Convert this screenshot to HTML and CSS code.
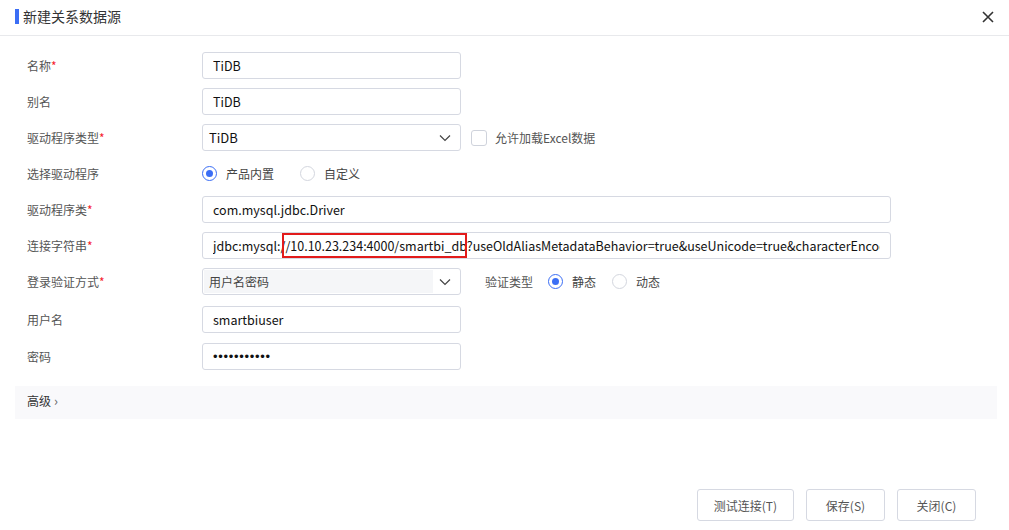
FILE: index.html
```html
<!DOCTYPE html>
<html lang="zh-CN">
  <head>
    <meta charset="UTF-8" />
    <meta name="viewport" content="width=device-width, initial-scale=1.0" />
    <title>新建关系数据源</title>
    <link rel="stylesheet" href="styles.css">
  </head>
  <body>
    <div class="dialog">
      <div class="header">
        <span class="title">新建关系数据源</span>
        <svg class="close" width="12" height="12" viewBox="0 0 12 12">
          <path d="M1 1L11 11M11 1L1 11" stroke="#333" stroke-width="1.6" fill="none"></path>
        </svg>
      </div>

      <div class="form">
        <div class="row">
          <label class="label">名称<i>*</i></label>
          <input class="input short" type="text" value="TiDB" />
        </div>
        <div class="row">
          <label class="label">别名</label>
          <input class="input short" type="text" value="TiDB" />
        </div>
        <div class="row">
          <label class="label">驱动程序类型<i>*</i></label>
          <div class="select short">
            <span class="select-text">TiDB</span>
            <svg class="chevron" width="12" height="8" viewBox="0 0 12 8"><path d="M1 1.5L6 6.5L11 1.5" stroke="#444" stroke-width="1.2" fill="none"></path></svg>
          </div>
          <span class="checkbox"></span>
          <span class="extra">允许加载Excel数据</span>
        </div>
        <div class="row">
          <label class="label">选择驱动程序</label>
          <span class="radio checked"></span>
          <span class="radio-text">产品内置</span>
          <span class="radio"></span>
          <span class="radio-text">自定义</span>
        </div>
        <div class="row">
          <label class="label">驱动程序类<i>*</i></label>
          <input class="input long" type="text" value="com.mysql.jdbc.Driver" />
        </div>
        <div class="row">
          <label class="label">连接字符串<i>*</i></label>
          <div class="field-wrap">
            <input class="input long" type="text" value="jdbc:mysql://10.10.23.234:4000/smartbi_db?useOldAliasMetadataBehavior=true&amp;useUnicode=true&amp;characterEncoding=UTF-8" />
            <span class="mark"></span>
          </div>
        </div>
        <div class="row row-login">
          <label class="label">登录验证方式<i>*</i></label>
          <div class="select short">
            <span class="select-text grey">用户名密码</span>
            <svg class="chevron" width="12" height="8" viewBox="0 0 12 8"><path d="M1 1.5L6 6.5L11 1.5" stroke="#444" stroke-width="1.2" fill="none"></path></svg>
          </div>
          <span class="extra-label">验证类型</span>
          <span class="radio checked"></span>
          <span class="radio-text tight">静态</span>
          <span class="radio"></span>
          <span class="radio-text tight">动态</span>
        </div>
        <div class="row row-user">
          <label class="label">用户名</label>
          <input class="input short" type="text" value="smartbiuser" />
        </div>
        <div class="row">
          <label class="label">密码</label>
          <input class="input short" type="password" value="smartbiuser" />
        </div>
      </div>

      <div class="advanced">高级 <span class="arrow">›</span></div>

      <div class="footer">
        <button class="btn wide">测试连接(T)</button>
        <button class="btn">保存(S)</button>
        <button class="btn">关闭(C)</button>
      </div>
    </div>
  </body>
</html>
```

FILE: styles.css
```css
* {
  box-sizing: border-box;
}
body {
  margin: 0;
  background: #fff;
  font-family: "Noto Sans CJK SC", "Microsoft YaHei", sans-serif;
  color: #333;
}
.dialog {
  width: 1009px;
  height: 530px;
  position: relative;
}
.header {
  height: 36px;
  border-bottom: 1px solid #e8e9ec;
  display: flex;
  align-items: center;
  padding: 0 15px 2px 15px;
}
.title {
  flex: 1;
  display: flex;
  align-items: center;
  font-size: 14px;
  line-height: 15px;
  color: #333;
}
.title::before {
  content: "";
  width: 4px;
  height: 15px;
  background: #3b6ef5;
  margin-right: 4px;
}
.close {
  display: block;
  margin-top: 1px;
}
.form {
  padding: 16px 0 0 27px;
  display: flex;
  flex-direction: column;
  gap: 9px;
}
.row {
  height: 27px;
  display: flex;
  align-items: center;
}
.row-login {
  margin-bottom: 2px;
}
.row-user {
  margin-bottom: 1px;
}
.label {
  width: 175px;
  font-size: 12px;
  color: #555;
  flex: none;
}
.label i {
  font-style: normal;
  color: #f5222d;
}
.input {
  height: 27px;
  border: 1px solid #d6d9e2;
  border-radius: 3px;
  padding: 0 10px;
  font-family: "Noto Sans CJK SC", sans-serif;
  font-size: 12.5px;
  color: #111;
  outline: none;
}
.short {
  width: 259px;
}
.long {
  width: 689px;
}
input[type="password"] {
  font-family: "Liberation Sans", sans-serif;
  font-size: 13px;
  letter-spacing: 0.7px;
}
.field-wrap {
  position: relative;
}
.mark {
  position: absolute;
  left: 80px;
  top: 1px;
  width: 185px;
  height: 25px;
  border: 2px solid #e21b1b;
  pointer-events: none;
}
.select {
  height: 27px;
  border: 1px solid #d6d9e2;
  border-radius: 3px;
  display: flex;
  align-items: center;
  padding: 1px 9px 1px 1px;
}
.select-text {
  flex: 1;
  height: 100%;
  display: flex;
  align-items: center;
  padding-left: 5px;
  font-size: 13px;
  color: #111;
}
.select-text.grey {
  background: #f5f6f8;
  color: #444;
  font-size: 12px;
  margin-right: 6px;
}
.chevron {
  display: block;
}
.checkbox {
  width: 16px;
  height: 16px;
  border: 1px solid #cfd3dc;
  border-radius: 3px;
  margin-left: 10px;
}
.extra {
  margin-left: 8px;
  font-size: 12px;
  color: #555;
}
.extra-label {
  margin-left: 24px;
  margin-right: 15px;
  font-size: 12px;
  color: #555;
}
.radio {
  width: 15px;
  height: 15px;
  border: 1px solid #d3d6de;
  border-radius: 50%;
  flex: none;
  position: relative;
}
.radio.checked {
  border-color: #3b6ef5;
}
.radio.checked::after {
  content: "";
  position: absolute;
  left: 3px;
  top: 3px;
  width: 7px;
  height: 7px;
  border-radius: 50%;
  background: #3b6ef5;
}
.radio-text {
  margin-left: 9px;
  margin-right: 26px;
  font-size: 12px;
  color: #444;
}
.radio-text.tight {
  margin-right: 16px;
}
.advanced {
  margin: 16px 12px 0 15px;
  height: 33px;
  background: #f9f9fb;
  padding: 0 0 5px 12px;
  display: flex;
  align-items: center;
  font-size: 12px;
  color: #333;
}
.arrow {
  margin-left: 3px;
  color: #666;
  font-size: 13px;
}
.footer {
  position: absolute;
  right: 33px;
  bottom: 9px;
  display: flex;
  gap: 12px;
}
.btn {
  height: 32px;
  padding: 0 16px;
  min-width: 79px;
  border: 1px solid #d6d9e2;
  border-radius: 3px;
  background: #fff;
  font-family: "Noto Sans CJK SC", sans-serif;
  font-size: 12px;
  color: #555;
}
.btn.wide {
  min-width: 96px;
}
```
